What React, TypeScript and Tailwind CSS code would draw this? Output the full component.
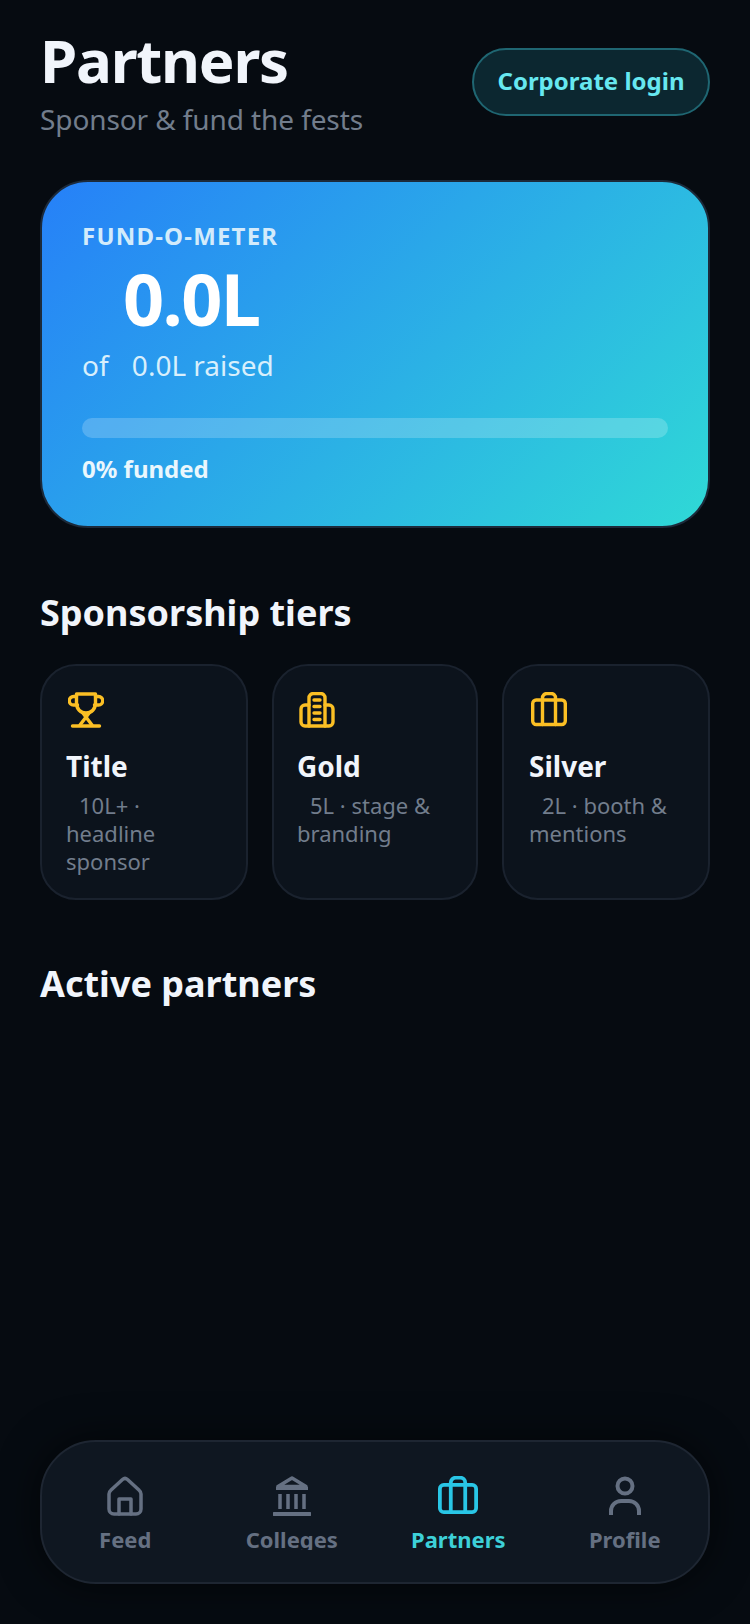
import type { ReactNode } from "react";

const F = { fontFamily: '"Noto Sans", sans-serif' };

function Trophy({ className }: { className?: string }) {
  return (
    <svg viewBox="0 0 36 36" fill="none" stroke="currentColor" strokeWidth="3.4" strokeLinecap="round" strokeLinejoin="round" className={className}>
      <path d="M8.500 2h19v9c0 6-4 10-9.500 10S8.500 17 8.500 11z" />
      <path d="M8.500 4.500H5.500a4 4 0 0 0 0 8.500h4" />
      <path d="M27.500 4.500h3a4 4 0 0 1 0 8.500h-4" />
      <path d="M14.500 20.500 24 33M21.500 20.500 12 33" />
      <path d="M4.500 34h27" />
    </svg>
  );
}

function Building({ className }: { className?: string }) {
  return (
    <svg viewBox="0 0 36 36" fill="none" stroke="currentColor" strokeWidth="3.400" strokeLinecap="round" strokeLinejoin="round" className={className}>
      <path d="M10 34V6a4.500 4.500 0 0 1 4.500-4.500h7A4.500 4.500 0 0 1 26 6v28" />
      <path d="M10 13H6a4 4 0 0 0-4 4v13a4 4 0 0 0 4 4h24a4 4 0 0 0 4-4V17a4 4 0 0 0-4-4h-4" />
      <path d="M15 8h6M15 14.500h6M15 21h6M15 27.500h6" />
    </svg>
  );
}

function Briefcase({ className }: { className?: string }) {
  return (
    <svg viewBox="0 0 36 36" fill="none" stroke="currentColor" strokeWidth="3.400" strokeLinecap="round" strokeLinejoin="round" className={className}>
      <rect x="1.700" y="8" width="32.600" height="24.500" rx="3.500" />
      <path d="M11.500 32.500V6a4.500 4.500 0 0 1 4.500-4.500h4A4.500 4.500 0 0 1 24.500 6v26.500" />
    </svg>
  );
}

function Home({ className }: { className?: string }) {
  return (
    <svg viewBox="0 0 38 40" fill="none" stroke="currentColor" strokeWidth="3.500" strokeLinecap="round" strokeLinejoin="round" className={className}>
      <path d="M3 18c0-1.500.7-2.800 1.800-3.700L16.500 3.500a3.800 3.800 0 0 1 5 0l11.700 10.800c1.100.9 1.800 2.200 1.800 3.700v15a5 5 0 0 1-5 5H8a5 5 0 0 1-5-5z" />
      <path d="M13 38V23h12v15" />
    </svg>
  );
}

function Bank({ className }: { className?: string }) {
  return (
    <svg viewBox="0 0 38 40" fill="none" stroke="currentColor" strokeWidth="3.500" strokeLinejoin="round" className={className}>
      <path d="M19 2 5 10.500h28z" />
      <path d="M3 12.500h32" strokeWidth="3" />
      <path d="M7 18v15M15 18v15M23 18v15M31 18v15" />
      <path d="M1 38h36" strokeWidth="4" strokeLinecap="round" />
    </svg>
  );
}

function Person({ className }: { className?: string }) {
  return (
    <svg viewBox="0 0 32 40" fill="none" stroke="currentColor" strokeWidth="4" className={className}>
      <circle cx="16" cy="10" r="7.500" />
      <path d="M2 39v-4a10 10 0 0 1 10-10h8a10 10 0 0 1 10 10v4" />
    </svg>
  );
}

const tiers = [
  { name: "Title", text: "10L+ · headline sponsor", pad: "pl-6", icon: <Trophy className="w-9 h-9" /> },
  { name: "Gold", text: "5L · stage & branding", pad: "pl-[23px]", icon: <Building className="w-9 h-9" /> },
  { name: "Silver", text: "2L · booth & mentions", pad: "pl-[25px]", icon: <Briefcase className="w-9 h-9" /> },
];

function NavItem({ icon, label, active }: { icon: ReactNode; label: string; active?: boolean }) {
  return (
    <div className={`flex flex-1 flex-col items-center ${active ? "text-[#3dd0d8]" : "text-[#657082]"}`}>
      <div className={`h-10 flex items-center justify-center ${active ? "text-[#29c6e6]" : ""}`}>{icon}</div>
      <div className="mt-[8px] h-[26px] overflow-hidden text-[22px] leading-[30px] font-bold">{label}</div>
    </div>
  );
}

export default function App() {
  return (
    <div style={F} className="relative h-[1624px] w-[750px] overflow-hidden bg-[#060b11] text-[#f1f5fb]">
      <div className="px-10 pt-[24px]">
        <header className="flex items-start justify-between">
          <div>
            <h1 className="text-[60px] leading-[72px] font-bold tracking-[-1.25px]">Partners</h1>
            <p className="mt-[4px] text-[28px] leading-[38px] tracking-[-0.1px] text-[#727d8c]">Sponsor &amp; fund the fests</p>
          </div>
          <button className="mt-6 h-[68px] w-[238px] rounded-full border-2 border-[#1f6672] bg-[#0c2730] pb-[2px] text-[24px] font-bold text-[#67e8f0]">
            Corporate login
          </button>
        </header>

        <section className="mt-[42px] h-[348px] rounded-[48px] border-2 border-[#1c2a3a] bg-[linear-gradient(135deg,#2680f8,#2fd9d6)] px-10 pt-10">
          <div className="text-[24px] leading-[28px] font-bold tracking-[1.2px] text-[#d3ebfb]">FUND-O-METER</div>
          <div className="mt-[8px] pl-[41px] text-[72px] leading-[80px] font-bold tracking-[-1.6px] text-white">0.0L</div>
          <div className="mt-[8px] text-[28px] leading-[38px] text-[#d8effc]">
            of <span className="ml-[16px]">0.0L raised</span>
          </div>
          <div className="mt-[34px] h-5 rounded-full bg-white/20" />
          <div className="mt-[15px] text-[24px] leading-[32px] font-bold text-[#eaf7fd]">0% funded</div>
        </section>

        <h2 className="mt-[61px] text-[36px] leading-[48px] font-bold">Sponsorship tiers</h2>
        <div className="mt-[27px] grid grid-cols-[208px_206px_208px] gap-6">
          {tiers.map((t) => (
            <div key={t.name} className={`h-[236px] rounded-[36px] border-2 border-[#1a222e] bg-[#0c131c] py-6 pr-4 ${t.pad}`}>
              <div className="ml-[2px] mt-[2px] text-[#fbbf24]">{t.icon}</div>
              <div className="mt-[19px] text-[28px] leading-[38px] font-bold">{t.name}</div>
              <div className="mt-[6px] text-[22px] leading-[28px] text-[#727d8c]">
                <span className="inline-block w-[13px]" />
                {t.text}
              </div>
            </div>
          ))}
        </div>

        <h2 className="mt-[60px] text-[36px] leading-[48px] font-bold">Active partners</h2>
      </div>

      <nav className="absolute bottom-10 left-10 right-10 flex h-[144px] items-start rounded-[56px] border-2 border-[#1e2632] bg-[#0f1721] pt-[34px] shadow-[0_0_40px_rgba(0,0,0,0.6)]">
        <NavItem label="Feed" icon={<Home className="w-[38px] h-[40px]" />} />
        <NavItem label="Colleges" icon={<Bank className="w-[38px] h-[40px]" />} />
        <NavItem label="Partners" active icon={<Briefcase className="w-10 h-10" />} />
        <NavItem label="Profile" icon={<Person className="w-[32px] h-[40px]" />} />
      </nav>
    </div>
  );
}
